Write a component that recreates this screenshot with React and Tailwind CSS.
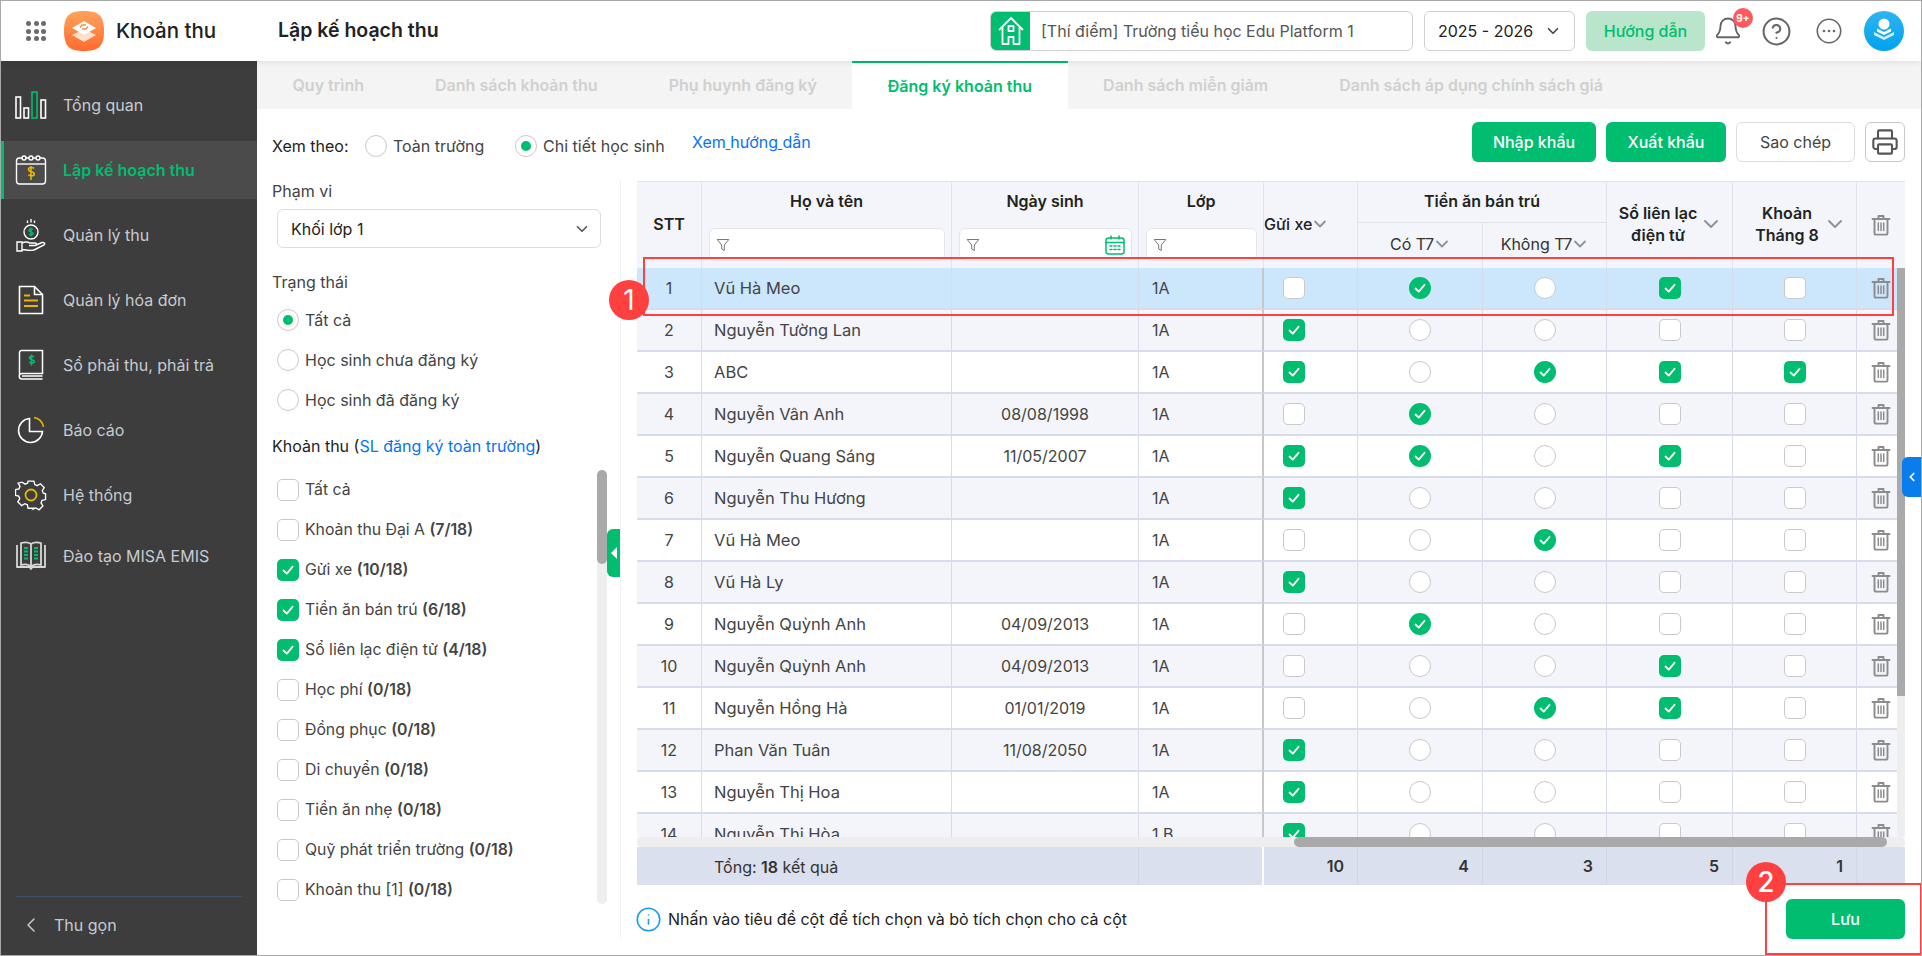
import React from 'react';
import { Bell, CircleHelp, ChevronDown, ChevronLeft, Printer, Info } from 'lucide-react';

const rows = [
  [1, 'Vũ Hà Meo', '', '1A', 0, 1, 0, 1, 0],
  [2, 'Nguyễn Tường Lan', '', '1A', 1, 0, 0, 0, 0],
  [3, 'ABC', '', '1A', 1, 0, 1, 1, 1],
  [4, 'Nguyễn Vân Anh', '08/08/1998', '1A', 0, 1, 0, 0, 0],
  [5, 'Nguyễn Quang Sáng', '11/05/2007', '1A', 1, 1, 0, 1, 0],
  [6, 'Nguyễn Thu Hương', '', '1A', 1, 0, 0, 0, 0],
  [7, 'Vũ Hà Meo', '', '1A', 0, 0, 1, 0, 0],
  [8, 'Vũ Hà Ly', '', '1A', 1, 0, 0, 0, 0],
  [9, 'Nguyễn Quỳnh Anh', '04/09/2013', '1A', 0, 1, 0, 0, 0],
  [10, 'Nguyễn Quỳnh Anh', '04/09/2013', '1A', 0, 0, 0, 1, 0],
  [11, 'Nguyễn Hồng Hà', '01/01/2019', '1A', 0, 0, 1, 1, 0],
  [12, 'Phan Văn Tuân', '11/08/2050', '1A', 1, 0, 0, 0, 0],
  [13, 'Nguyễn Thị Hoa', '', '1A', 1, 0, 0, 0, 0],
  [14, 'Nguyễn Thị Hòa', '', '1 B', 1, 0, 0, 0, 0],
];

const fees = [
  ['Tất cả', '', 0],
  ['Khoản thu Đại A', '(7/18)', 0],
  ['Gửi xe', '(10/18)', 1],
  ['Tiền ăn bán trú', '(6/18)', 1],
  ['Sổ liên lạc điện tử', '(4/18)', 1],
  ['Học phí', '(0/18)', 0],
  ['Đồng phục', '(0/18)', 0],
  ['Di chuyển', '(0/18)', 0],
  ['Tiền ăn nhẹ', '(0/18)', 0],
  ['Quỹ phát triển trường', '(0/18)', 0],
  ['Khoản thu [1]', '(0/18)', 0],
];

const Tick = ({ s = 14 }) => (
  <svg width={s} height={s} viewBox="0 0 14 14" fill="none" stroke="#fff" strokeWidth="1.8" strokeLinecap="round" strokeLinejoin="round">
    <path d="M2.5 7.5 5.8 10.6 11.5 3.8" />
  </svg>
);

const Check = ({ on }) =>
  on ? (
    <span className="w-[22px] h-[22px] rounded-[5px] bg-[#00bd70] flex items-center justify-center shrink-0"><Tick /></span>
  ) : (
    <span className="w-[22px] h-[22px] rounded-[5px] bg-white border border-[#c9c9c9] block shrink-0" />
  );

const Round = ({ on }) =>
  on ? (
    <span className="w-[22px] h-[22px] rounded-full bg-[#00bd70] flex items-center justify-center shrink-0"><Tick /></span>
  ) : (
    <span className="w-[22px] h-[22px] rounded-full bg-white border border-[#c9c9c9] block shrink-0" />
  );

const Radio = ({ on }) => (
  <span className="w-[22px] h-[22px] rounded-full bg-white border border-[#c9c9c9] flex items-center justify-center shrink-0">
    {on ? <span className="w-[10px] h-[10px] rounded-full bg-[#00bd70]" /> : null}
  </span>
);

const Trash = () => (
  <svg width="20" height="22" viewBox="0 0 20 22" fill="none" stroke="#8c8c8c" strokeWidth="1.9" strokeLinecap="round" strokeLinejoin="round">
    <path d="M1.500 5h17M7.500 5V2h5v3" />
    <path d="M3.500 5v14a1.600 1.600 0 0 0 1.600 1.600h9.800a1.600 1.600 0 0 0 1.600-1.600V5" />
    <path d="M7.300 9v7.500M10 9v7.500M12.700 9v7.500" strokeWidth="1.500" />
  </svg>
);

const Funnel = () => (
  <svg width="14" height="14" viewBox="0 0 14 14" fill="none" stroke="#777" strokeWidth="1" strokeLinejoin="round">
    <path d="M1.200 1.500h11.600L8.300 7v5.500L5.700 11V7z" />
  </svg>
);

const Chev = () => <ChevronDown size={20} strokeWidth={2.200} className="text-[#8d939c] shrink-0 -mx-[2px]" />;
const ChevB = () => <ChevronDown size={24} strokeWidth={2} className="text-[#8d939c] shrink-0 -mr-[3px]" />;

const Filter = ({ cal }) => (
  <div className="ml-[7px] mr-[6px] h-[33px] bg-white border border-[#e3e5ea] rounded-md flex items-center justify-between px-[6px] text-left">
    <Funnel />
    {cal ? (
      <svg width="20" height="20" viewBox="0 0 20 20" fill="none" stroke="#00bd70" strokeWidth="1.500" strokeLinecap="round">
        <rect x="1" y="3" width="18" height="16" rx="2.500" />
        <path d="M1 7.500h18M6 1v3M14 1v3M5 11h2M9 11h2M13 11h2M5 14.500h2M9 14.500h2M13 14.500h2" />
      </svg>
    ) : null}
  </div>
);

const Cols = () => (
  <colgroup>
    <col className="w-[65px]" />
    <col className="w-[250px]" />
    <col className="w-[187px]" />
    <col className="w-[125px]" />
    <col className="w-[94px]" />
    <col className="w-[125px]" />
    <col className="w-[124px]" />
    <col className="w-[126px]" />
    <col className="w-[124px]" />
    <col className="w-[48px]" />
  </colgroup>
);

const Stroke = 'white';

const navIcons = [
  <svg width="34" height="28" viewBox="0 0 34 28" fill="none" strokeWidth="1.600">
    <rect x="2" y="6" width="4.500" height="21" stroke={Stroke} />
    <rect x="10" y="17" width="4.500" height="10" stroke={Stroke} />
    <rect x="18" y="1" width="5" height="26" stroke="#00bd70" />
    <rect x="27" y="9" width="4.500" height="18" stroke={Stroke} />
  </svg>,
  <svg width="32" height="32" viewBox="0 0 32 32" fill="none" strokeWidth="1.400">
    <rect x="1.500" y="4" width="29" height="26" rx="3" stroke={Stroke} />
    <path d="M1.500 10h29" stroke={Stroke} />
    <circle cx="9" cy="4" r="2" stroke={Stroke} fill="#4b4b4b" />
    <circle cx="16" cy="4" r="2" stroke={Stroke} fill="#4b4b4b" />
    <circle cx="23" cy="4" r="2" stroke={Stroke} fill="#4b4b4b" />
    <path d="M19 14.500c-1-1.200-5.500-1.600-5.500 1 0 2.800 5.800 1.500 5.800 4.400 0 2.600-4.800 2.200-6 .8M16 12v14" stroke="#e8b500" strokeWidth="1.600" />
  </svg>,
  <svg width="30" height="34" viewBox="0 0 30 34" fill="none" strokeWidth="1.400">
    <circle cx="15" cy="14" r="7" stroke={Stroke} />
    <path d="M15 1v3.500M11.500 2.500v2.500M18.500 2.500v2.500" stroke={Stroke} />
    <path d="M17 11.500c-.7-.8-4-1-4 .9 0 1.900 4.200 1 4.200 3 0 1.800-3.400 1.500-4.300.5M15 9.500v9" stroke="#00bd70" strokeWidth="1.400" />
    <path d="M1 24h5v9H1zM6 25c4-2 6-1 8 0h5c2 0 2 2.500 0 2.500h-6M19 27.500l7-3c2-.5 3.500 1 2 2.500L18 32c-3 1-8 0-12-.5" stroke={Stroke} />
  </svg>,
  <svg width="26" height="30" viewBox="0 0 26 30" fill="none" strokeWidth="1.600">
    <path d="M1.500 1.500h15l8 8v19h-23z" stroke={Stroke} />
    <path d="M16.500 1.500v8h8" stroke={Stroke} />
    <path d="M6 10.500h6M6 15.500h14M6 21h14" stroke="#e8b500" strokeWidth="1.800" />
  </svg>,
  <svg width="26" height="32" viewBox="0 0 26 32" fill="none" strokeWidth="1.500">
    <path d="M1.500 26V3.500a2 2 0 0 1 2-2h21v23H4a2.500 2.500 0 0 0 0 5.500h20.500M4 27h20.500" stroke={Stroke} />
    <path d="M16 8c-.8-1-4.600-1.200-4.600 1 0 2.200 4.900 1.200 4.900 3.500 0 2-3.900 1.700-5 .6M13.500 5.500v11" stroke="#00bd70" strokeWidth="1.600" />
  </svg>,
  <svg width="28" height="28" viewBox="0 0 28 28" fill="none" strokeWidth="1.600">
    <path d="M12.500 2.500a12 12 0 1 0 13 13h-13z" stroke={Stroke} />
    <path d="M17 1.500a11 11 0 0 1 9.500 9.500" stroke="#e8b500" />
  </svg>,
  <svg width="32" height="32" viewBox="0 0 32 32" fill="none" strokeWidth="1.400">
    <path d="M13 2h6l.8 3.600 2.600 1.100 3.200-2 4 4-2 3.200 1.100 2.600 2.300.5v6l-3.600.8-1.100 2.600 2 3.200-4 4-3.200-2-2.600 1.100L19 30h-6l-.8-3.600-2.600-1.100-3.200 2-4-4 2-3.200-1.100-2.600L0 16.700v-6l3.600-.8 1.100-2.600-2-3.200 4-1 3.200 2 2.600-1.100z" stroke={Stroke} transform="translate(.5 .2) scale(.97)" />
    <circle cx="16" cy="16" r="5.500" stroke="#e8b500" strokeWidth="1.800" />
  </svg>,
  <svg width="34" height="30" viewBox="0 0 34 30" fill="none" strokeWidth="1.800" strokeLinejoin="round">
    <path d="M3 4v22h12.500l1.500 2 1.500-2H31V4" stroke="#d8d8d8" />
    <path d="M17 26V3c-2-1.500-6-2-10-1v22c4-1 8-.5 10 2 2-2.500 6-3 10-2V2c-4-1-8-.5-10 1z" stroke="#d8d8d8" />
    <path d="M10 7h4M10 10.500h4M10 14h4M10 17.500h4M20 7h4M20 10.500h4M20 14h4M20 17.500h4" stroke="#00bd70" strokeWidth="2.200" />
  </svg>,
];

const nav = ['Tổng quan', 'Lập kế hoạch thu', 'Quản lý thu', 'Quản lý hóa đơn', 'Sổ phải thu, phải trả', 'Báo cáo', 'Hệ thống', 'Đào tạo MISA EMIS'];
const tabs = ['Quy trình', 'Danh sách khoản thu', 'Phụ huynh đăng ký', 'Đăng ký khoản thu', 'Danh sách miễn giảm', 'Danh sách áp dụng chính sách giá'];

const btn = 'h-[40px] rounded-md flex items-center justify-center text-[16px]';

export default function App() {
  return (
    <div className="relative w-[1922px] h-[956px] overflow-hidden border border-[#a8a8a8] bg-white flex flex-col font-['Inter',sans-serif] text-[16px] text-[#444]">
      {/* Header */}
      <header className="h-[60px] shrink-0 flex items-center bg-white relative z-10 shadow-[0_2px_6px_rgba(0,0,0,0.08)]">
        <div className="ml-[25px] w-[20px] grid grid-cols-3 gap-[2.5px]">
          {[...Array(9)].map((_, i) => <span key={i} className="w-[5px] h-[5px] rounded-full bg-[#6b6b6b]" />)}
        </div>
        <svg className="ml-[18px] shrink-0" width="40" height="40" viewBox="0 0 40 40">
          <defs>
            <linearGradient id="lg" x1="0" y1="0" x2="0" y2="1">
              <stop offset="0" stopColor="#ffa35c" />
              <stop offset="1" stopColor="#ff6a2d" />
            </linearGradient>
          </defs>
          <path d="M20 0c13 0 20 3 20 20s-7 20-20 20S0 37 0 20 7 0 20 0z" fill="url(#lg)" />
          <path d="M20 18 32 24 20 31 8 24z" fill="#ffe0cc" />
          <path d="M20 10 32 17 20 24 8 17z" fill="#fff" />
          <path d="M16 16.500 18 14h4M24 15.500 22 18h-4" stroke="#ff8a3d" strokeWidth="1.300" fill="none" />
        </svg>
        <div className="ml-[12px] w-[162px] text-[20.500px] font-medium text-[#222]">Khoản thu</div>
        <div className="text-[19.500px] font-semibold text-[#222]">Lập kế hoạch thu</div>
        <div className="ml-auto flex items-center">
          <div className="w-[423px] h-[40px] flex border border-[#d0d0d0] rounded-md overflow-hidden">
            <div className="w-[39px] bg-[#00bd70] flex items-center justify-center shrink-0">
              <svg width="26" height="30" viewBox="0 0 26 30" fill="none" stroke="#fff" strokeWidth="1.800" strokeLinejoin="round">
                <path d="M1 14 13 2l12 12M4.500 11v17H10.500v-7h5v7H21.500V11" />
                <rect x="10.500" y="10" width="5" height="5" />
              </svg>
            </div>
            <div className="px-[11px] flex items-center text-[#555] whitespace-nowrap">[Thí điểm] Trường tiểu học Edu Platform 1</div>
          </div>
          <div className="ml-[11px] w-[151px] h-[40px] border border-[#d0d0d0] rounded-md flex items-center justify-between pl-[13px] pr-[12px] text-[#222]">
            2025 - 2026 <ChevronDown size={18} strokeWidth={2.200} className="text-[#444]" />
          </div>
          <div className="ml-[11px] w-[119px] h-[40px] bg-[#b8e5cb] rounded-md flex items-center justify-center text-[#00bd70] font-medium">Hướng dẫn</div>
          <div className="relative w-[46px] flex justify-center">
            <Bell size={30} strokeWidth={1.500} className="text-[#666]" />
            <span className="absolute -top-[8px] right-[-2px] w-[20px] h-[20px] rounded-full bg-[#ff5a5f] text-white text-[10px] font-bold flex items-center justify-center">9+</span>
          </div>
          <CircleHelp size={31} strokeWidth={1.600} className="ml-[9.500px] text-[#666]" />
          <svg className="ml-[24.500px]" width="26" height="26" viewBox="0 0 26 26" fill="none">
            <circle cx="13" cy="13" r="11.700" stroke="#666" strokeWidth="1.600" />
            <circle cx="8" cy="13" r="1.300" fill="#666" />
            <circle cx="13" cy="13" r="1.300" fill="#666" />
            <circle cx="18" cy="13" r="1.300" fill="#666" />
          </svg>
          <svg className="ml-[22px] mr-[17px]" width="40" height="40" viewBox="0 0 40 40">
            <defs>
              <linearGradient id="av" x1="0" y1="0" x2="0" y2="1">
                <stop offset="0" stopColor="#2fb4f0" />
                <stop offset="1" stopColor="#00a2ee" />
              </linearGradient>
            </defs>
            <circle cx="20" cy="20" r="20" fill="url(#av)" />
            <circle cx="20" cy="13" r="5.500" fill="#fff" />
            <path d="M13 17.500 20 21l7-3.500v3L20 24l-7-3.500z" fill="#fff" />
            <path d="M10 21l10 5 10-5v3l-10 5-10-5z" fill="#cdeffd" />
          </svg>
        </div>
      </header>

      <div className="flex flex-1 min-h-0">
        {/* Sidebar */}
        <aside className="w-[256px] shrink-0 bg-[#3d3d3d] flex flex-col pt-[15px]">
          {nav.map((n, i) => (
            <div key={n} className={`${i === 1 ? 'bg-[#4b4b4b] border-[#00bd70] font-semibold text-[#00bd70]' : 'border-transparent text-[#c6cbd2]'} ${i === 7 ? '-mt-[4px]' : ''} h-[58px] mb-[7px] flex items-center border-l-[3px] shrink-0`}>
              <div className="w-[59px] flex justify-center pl-[1px] pr-[7px] shrink-0">{navIcons[i]}</div>
              <span>{n}</span>
            </div>
          ))}
          <div className="mt-auto mx-[15px] h-[59px] pb-[2px] border-t border-[#3f5168] flex items-center text-[#c6cbd2]">
            <ChevronLeft size={24} strokeWidth={1.500} className="ml-[3px] mr-[11px]" />
            Thu gọn
          </div>
        </aside>

        {/* Main */}
        <main className="flex-1 min-w-0 flex flex-col">
          <nav className="h-[48px] shrink-0 bg-[#f4f4f4] flex">
            {tabs.map((t, i) => (
              <div key={t} className={`px-[35.500px] flex items-center whitespace-nowrap font-semibold ${i === 3 ? 'bg-white text-[#00bd70] border-t-2 border-[#00bd70]' : 'text-[#d0d0d0]'}`}>{t}</div>
            ))}
          </nav>

          <div className="mt-[13px] pl-[15px] pr-[16px] h-[40px] shrink-0 flex items-center">
            <div className="mt-[8px] w-[93px] text-[#222]">Xem theo:</div>
            <div className="mt-[8px] w-[150px] flex items-center gap-[6px]"><Radio />Toàn trường</div>
            <div className="mt-[8px] w-[177px] flex items-center gap-[6px]"><Radio on />Chi tiết học sinh</div>
            <div className="text-[#0a73f0]">Xem<span className="underline"> </span>hướng<span className="underline"> </span>dẫn</div>
            <div className={`ml-auto w-[124px] bg-[#00bd70] text-white font-medium ${btn}`}>Nhập khẩu</div>
            <div className={`ml-[10px] w-[120px] bg-[#00bd70] text-white font-medium ${btn}`}>Xuất khẩu</div>
            <div className={`ml-[10px] w-[119px] border border-[#dcdcdc] ${btn}`}>Sao chép</div>
            <div className={`ml-[10px] w-[40px] border border-[#c8c8c8] ${btn}`}><Printer size={28} strokeWidth={1.800} className="text-[#555]" /></div>
          </div>

          <div className="mt-[19px] flex flex-1 min-h-0">
            {/* Left filter panel */}
            <section className="relative -mt-[1px] w-[364px] shrink-0 h-[759px] border-r border-[#eef0f4] pl-[15px] flex flex-col">
              <div className="h-[22px] leading-[22px]">Phạm vi</div>
              <div className="mt-[7px] ml-[5px] w-[324px] h-[39px] border border-[#dcdcdc] rounded-md flex items-center justify-between pl-[13px] pr-[9px] text-[#222]">
                Khối lớp 1 <ChevronDown size={18} strokeWidth={2.200} className="text-[#555]" />
              </div>
              <div className="mt-[23px] h-[22px] leading-[22px]">Trạng thái</div>
              <div className="mt-[16px] ml-[5px] flex flex-col gap-[18px]">
                {['Tất cả', 'Học sinh chưa đăng ký', 'Học sinh đã đăng ký'].map((t, i) => (
                  <div key={t} className="h-[22px] flex items-center gap-[6px]"><Radio on={i === 0} />{t}</div>
                ))}
              </div>
              <div className="mt-[24px] h-[22px] leading-[22px] text-[#222]">Khoản thu (<span className="text-[#0a73f0]">SL đăng ký toàn trường</span>)</div>
              <div className="relative mt-[13px] ml-[5px] w-[330px] h-[434px] pt-[9px] flex flex-col gap-[18px] overflow-hidden text-[15.800px]">
                {fees.map(([a, b, on]) => (
                  <div key={a} className="h-[22px] flex items-center gap-[6px] shrink-0 whitespace-nowrap">
                    <Check on={on} />
                    <span>{a} {b ? <b className="font-semibold">{b}</b> : null}</span>
                  </div>
                ))}
                <div className="absolute right-0 top-0 bottom-0 w-[10px] rounded-md bg-[#eeeeee]">
                  <div className="h-[94px] rounded-full bg-[#a9a9a9]" />
                </div>
              </div>
              <div className="absolute left-[350px] top-[349px] w-[13px] h-[48px] bg-[#00bd70] rounded-l-md flex items-center justify-center">
                <span className="w-0 h-0 border-y-[6px] border-y-transparent border-r-[6px] border-r-white" />
              </div>
            </section>

            {/* Table */}
            <section className="pl-[16px] pr-[17px] flex-1 min-w-0 flex flex-col">
              <div className="relative w-[1268px] h-[656px] overflow-hidden">
                <table className="table-fixed w-[1268px] border-separate border-spacing-0">
                  <Cols />
                  <thead className="bg-[#f3f5fa] text-[#222]">
                    <tr className="h-[42px]">
                      <th rowSpan={2} className="border-t border-r border-[#e0e3ec] font-semibold pb-[3px]"><span>STT</span></th>
                      <th rowSpan={2} className="border-t border-r border-[#e0e3ec] font-semibold align-top pt-[8px]">
                        <div className="h-[22px] leading-[22px] mb-[16px]">Họ và tên</div>
                        <Filter />
                      </th>
                      <th rowSpan={2} className="border-t border-r border-[#e0e3ec] font-semibold align-top pt-[8px]">
                        <div className="h-[22px] leading-[22px] mb-[16px]">Ngày sinh</div>
                        <Filter cal />
                      </th>
                      <th rowSpan={2} className="border-t border-r border-[#e0e3ec] font-semibold align-top pt-[8px]">
                        <div className="h-[22px] leading-[22px] mb-[16px]">Lớp</div>
                        <Filter />
                      </th>
                      <th rowSpan={2} className="border-t border-r border-[#e0e3ec] font-medium text-left pb-[2px]">
                        <span className="flex items-center">Gửi xe<Chev /></span>
                      </th>
                      <th colSpan={2} className="border-t border-r border-b border-[#e0e3ec] font-semibold pb-[2px]">Tiền ăn bán trú</th>
                      <th rowSpan={2} className="border-t border-r border-[#e0e3ec] font-semibold leading-[22px] pb-[2px]">
                        <div className="flex items-center pl-[10px] pr-[12px]">
                          <span className="flex-1 whitespace-nowrap">Sổ liên lạc<br />điện tử</span><ChevB />
                        </div>
                      </th>
                      <th rowSpan={2} className="border-t border-r border-[#e0e3ec] font-semibold leading-[22px] pb-[2px]">
                        <div className="flex items-center pl-[18px] pr-[12px]">
                          <span className="flex-1 whitespace-nowrap">Khoản<br />Tháng 8</span><ChevB />
                        </div>
                      </th>
                      <th rowSpan={2} className="border-t border-[#e0e3ec]"><div className="flex justify-center"><Trash /></div></th>
                    </tr>
                    <tr className="h-[45px]">
                      <th className="border-r border-[#e0e3ec] font-normal text-[#333] pb-[3px]"><span className="flex items-center justify-center">Có T7<Chev /></span></th>
                      <th className="border-r border-[#e0e3ec] font-normal text-[#333] pb-[3px]"><span className="flex items-center justify-center">Không T7<Chev /></span></th>
                    </tr>
                  </thead>
                  <tbody>
                    {rows.map((r) => {
                      const bg = r[0] === 1 ? 'bg-[#cce6fc]' : r[0] % 2 === 0 ? 'bg-[#f3f5fa]' : 'bg-white';
                      const cell = 'border-b-2 border-r border-[#d8dbe9]';
                      return (
                        <tr key={r[0]} className={`h-[42px] ${bg}`}>
                          <td className={`${cell} text-center`}>{r[0]}</td>
                          <td className={`${cell} pl-[12px] text-[16.500px]`}>{r[1]}</td>
                          <td className={`${cell} text-center`}>{r[2]}</td>
                          <td className="border-b-2 border-[#d8dbe9] pl-[13px] border-r-2 border-r-[#c8c8c8]">{r[3]}</td>
                          <td className={`${cell} pl-[19px]`}><Check on={r[4]} /></td>
                          <td className={cell}><div className="flex justify-center"><Round on={r[5]} /></div></td>
                          <td className={cell}><div className="flex justify-center"><Round on={r[6]} /></div></td>
                          <td className={cell}><div className="flex justify-center"><Check on={r[7]} /></div></td>
                          <td className={cell}><div className="flex justify-center"><Check on={r[8]} /></div></td>
                          <td className="border-b-2 border-[#d8dbe9]"><div className="flex justify-center"><Trash /></div></td>
                        </tr>
                      );
                    })}
                  </tbody>
                </table>
                <div className="absolute right-0 top-[87px] bottom-0 w-[8px] bg-[#eeeeee] rounded-b-md">
                  <div className="h-[428px] bg-[#a9a9a9]" />
                </div>
              </div>
              <div className="w-[1268px] h-[10px] bg-[#eeeeee] rounded-sm shrink-0">
                <div className="ml-[657px] w-[593px] h-[10px] rounded-full bg-[#a9a9a9]" />
              </div>
              <table className="table-fixed w-[1268px] border-separate border-spacing-0 bg-[#dae0ed] text-[#333] shrink-0">
                <Cols />
                <tbody>
                  <tr className="h-[38px]">
                    <td />
                    <td className="pl-[12px] pt-[1px]">Tổng: <b className="font-semibold">18</b> kết quả</td>
                    <td className="border-r border-[#d0d6e5]" />
                    <td className="border-r-2 border-white" />
                    {[10, 4, 3, 5, 1].map((v) => (
                      <td key={v} className="pr-[13px] text-right font-semibold border-r border-[#d0d6e5]">{v}</td>
                    ))}
                    <td />
                  </tr>
                </tbody>
              </table>
              <div className="flex-1 min-h-0 w-[1268px] mb-[2px] flex items-center justify-between">
                <div className="flex items-center gap-[6px] text-[#222]">
                  <Info size={27} strokeWidth={1.400} className="text-[#1a9bf0] -ml-[2px]" />
                  Nhấn vào tiêu đề cột để tích chọn và bỏ tích chọn cho cả cột
                </div>
                <div className={`w-[119px] bg-[#00bd70] text-white font-medium ${btn}`}>Lưu</div>
              </div>
            </section>
          </div>
        </main>
      </div>

      {/* Overlays */}
      <div className="absolute left-[1901px] top-[456px] w-[19px] h-[40px] bg-[#0a7dec] rounded-l-md flex items-center justify-center">
        <ChevronLeft size={14} strokeWidth={3} className="text-white" />
      </div>
      <div className="absolute left-[642px] top-[256px] w-[1251px] h-[59px] border-2 border-[#ff4040]" />
      <div className="absolute left-[608px] top-[279px] w-[40px] h-[40px] rounded-full bg-[#ff4040] text-white text-[28px] flex items-center justify-center">1</div>
      <div className="absolute left-[1764px] top-[882px] w-[157px] h-[72px] border-2 border-[#ff4040]" />
      <div className="absolute left-[1745px] top-[861px] w-[40px] h-[40px] rounded-full bg-[#ff4040] text-white text-[28px] font-medium flex items-center justify-center">2</div>
    </div>
  );
}
